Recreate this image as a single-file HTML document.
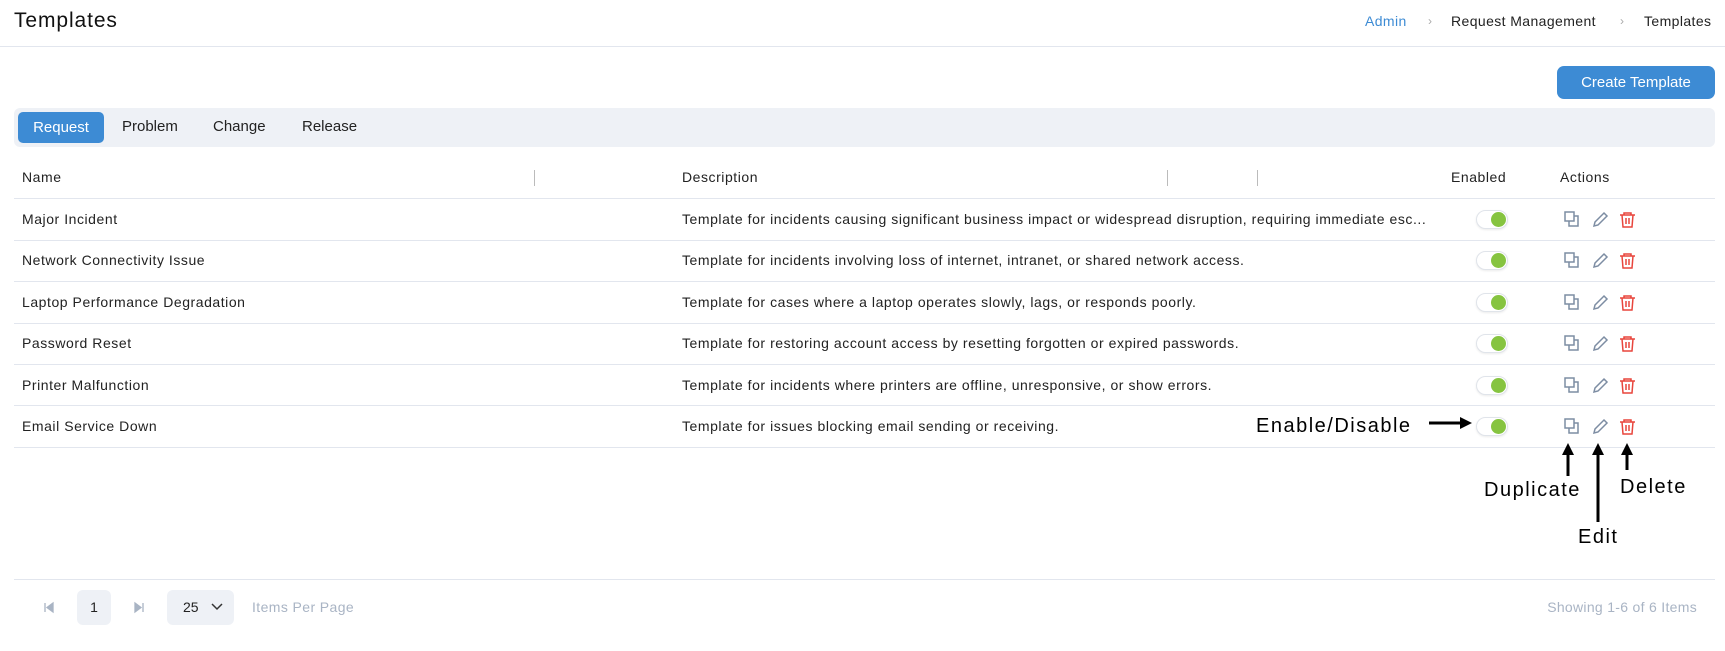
<!DOCTYPE html>
<html><head><meta charset="utf-8"><style>
*{margin:0;padding:0;box-sizing:border-box}
body{width:1725px;height:651px;background:#fff;font-family:"Liberation Sans",sans-serif;color:#222;position:relative;overflow:hidden}
.a{position:absolute;white-space:nowrap}
.hl{position:absolute;left:14px;width:1701px;height:1px;background:#e2e6ee}
.t{font-size:14px;color:#222;letter-spacing:.55px}
.tog{position:absolute;width:32px;height:19px;border-radius:10px;background:#fff;border:1px solid #e0e4ea;box-shadow:0 1px 2px rgba(0,0,0,.08)}
.tog::after{content:"";position:absolute;right:1px;top:1px;width:15px;height:15px;border-radius:50%;background:#86c440}
.sep{position:absolute;width:1px;height:16px;background:#bbb;top:170px}
.ann{font-size:20px;color:#000;position:absolute;white-space:nowrap;letter-spacing:1.5px}
</style></head><body>
<div class="a" style="left:14px;top:9px;font-size:21px;color:#111;letter-spacing:.9px">Templates</div>
<div class="a" style="left:1365px;top:13px;font-size:14px;color:#3d8bd4;letter-spacing:.4px">Admin</div>
<div class="a" style="left:1428px;top:14px;font-size:12px;color:#aaa">›</div>
<div class="a" style="left:1451px;top:13px;font-size:14px;letter-spacing:.4px">Request Management</div>
<div class="a" style="left:1620px;top:14px;font-size:12px;color:#aaa">›</div>
<div class="a" style="left:1644px;top:13px;font-size:14px;letter-spacing:.4px">Templates</div>
<div class="hl" style="left:0;width:1725px;top:46px"></div>

<div class="a" style="left:1557px;top:66px;width:158px;height:33px;border-radius:7px;background:#3d8bd4;color:#fff;font-size:15px;text-align:center;line-height:33px">Create Template</div>

<div class="a" style="left:14px;top:108px;width:1701px;height:39px;border-radius:6px;background:#eef1f6"></div>
<div class="a" style="left:18px;top:112px;width:86px;height:31px;border-radius:5px;background:#3d8bd4;color:#fff;font-size:15px;text-align:center;line-height:31px">Request</div>
<div class="a" style="left:122px;top:118px;font-size:15px">Problem</div>
<div class="a" style="left:213px;top:118px;font-size:15px">Change</div>
<div class="a" style="left:302px;top:118px;font-size:15px">Release</div>

<div class="a t" style="left:22px;top:169px">Name</div>
<div class="sep" style="left:534px"></div>
<div class="a t" style="left:682px;top:169px">Description</div>
<div class="sep" style="left:1167px"></div>
<div class="sep" style="left:1257px"></div>
<div class="a t" style="left:1451px;top:169px">Enabled</div>
<div class="a t" style="left:1560px;top:169px">Actions</div>
<div class="hl" style="top:198px"></div>

<div class="hl" style="top:240px"></div>
<div class="hl" style="top:281px"></div>
<div class="hl" style="top:323px"></div>
<div class="hl" style="top:364px"></div>
<div class="hl" style="top:405px"></div>
<div class="hl" style="top:447px"></div>
<div class="hl" style="top:579px"></div>

<div class="a t" style="left:22px;top:211px">Major Incident</div>
<div class="a t" style="left:682px;top:211px">Template for incidents causing significant business impact or widespread disruption, requiring immediate esc...</div>
<div class="a t" style="left:22px;top:252px">Network Connectivity Issue</div>
<div class="a t" style="left:682px;top:252px">Template for incidents involving loss of internet, intranet, or shared network access.</div>
<div class="a t" style="left:22px;top:294px">Laptop Performance Degradation</div>
<div class="a t" style="left:682px;top:294px">Template for cases where a laptop operates slowly, lags, or responds poorly.</div>
<div class="a t" style="left:22px;top:335px">Password Reset</div>
<div class="a t" style="left:682px;top:335px">Template for restoring account access by resetting forgotten or expired passwords.</div>
<div class="a t" style="left:22px;top:377px">Printer Malfunction</div>
<div class="a t" style="left:682px;top:377px">Template for incidents where printers are offline, unresponsive, or show errors.</div>
<div class="a t" style="left:22px;top:418px">Email Service Down</div>
<div class="a t" style="left:682px;top:418px">Template for issues blocking email sending or receiving.</div>

<div class="tog" style="left:1476px;top:210px"></div>
<div class="tog" style="left:1476px;top:251px"></div>
<div class="tog" style="left:1476px;top:293px"></div>
<div class="tog" style="left:1476px;top:334px"></div>
<div class="tog" style="left:1476px;top:376px"></div>
<div class="tog" style="left:1476px;top:417px"></div>

<div class="a" style="left:77px;top:590px;width:34px;height:35px;border-radius:6px;background:#eef1f6;font-size:14px;text-align:center;line-height:35px">1</div>
<div class="a" style="left:167px;top:590px;width:67px;height:35px;border-radius:6px;background:#eef1f6;font-size:14px;line-height:35px;padding-left:16px">25</div>
<div class="a" style="left:252px;top:599px;font-size:14px;color:#a9b4c4;letter-spacing:.4px">Items Per Page</div>
<div class="a" style="right:28px;top:599px;font-size:14px;color:#a9b4c4;letter-spacing:.3px">Showing 1-6 of 6 Items</div>

<svg width="1725" height="651" style="position:absolute;left:0;top:0">
<defs>
<g id="ic">
<g fill="none" stroke="#7d8da3" stroke-width="1.5">
<rect x="0" y="0" width="9" height="9"/><path d="M9 4h4v10H4v-5"/>
<path d="M39 1l3 3-9 9-4 1 1-4z"/>
</g>
<g fill="none" stroke="#e8453c" stroke-width="1.5">
<path d="M55 3h15M59 3V1h7v2M57 3l1 12h9l1-12M61 6v6M64 6v6"/>
</g>
</g>
</defs>
<use href="#ic" x="1565" y="212"/>
<use href="#ic" x="1565" y="253"/>
<use href="#ic" x="1565" y="295"/>
<use href="#ic" x="1565" y="336"/>
<use href="#ic" x="1565" y="378"/>
<use href="#ic" x="1565" y="419"/>
<g stroke="#000" stroke-width="3" fill="#000">
<line x1="1429" y1="423" x2="1462" y2="423"/><polygon points="1472,423 1460,417 1460,429" stroke="none"/>
<line x1="1568" y1="452" x2="1568" y2="476"/><polygon points="1568,443 1562,455 1574,455" stroke="none"/>
<line x1="1598" y1="452" x2="1598" y2="522"/><polygon points="1598,443 1592,455 1604,455" stroke="none"/>
<line x1="1627" y1="452" x2="1627" y2="470"/><polygon points="1627,443 1621,455 1633,455" stroke="none"/>
</g>
<path d="M45 603v9M53 603l-6 4.5 6 4.5z" fill="#a9b4c4" stroke="#a9b4c4" stroke-width="1.3"/>
<path d="M143 603v9M135 603l6 4.5-6 4.5z" fill="#a9b4c4" stroke="#a9b4c4" stroke-width="1.3"/>
<path d="M212 604l5 5 5-5" fill="none" stroke="#333" stroke-width="1.5"/>
</svg>

<div class="ann" style="left:1256px;top:415px">Enable/Disable</div>
<div class="ann" style="left:1484px;top:479px">Duplicate</div>
<div class="ann" style="left:1620px;top:476px">Delete</div>
<div class="ann" style="left:1578px;top:526px">Edit</div>
</body></html>
